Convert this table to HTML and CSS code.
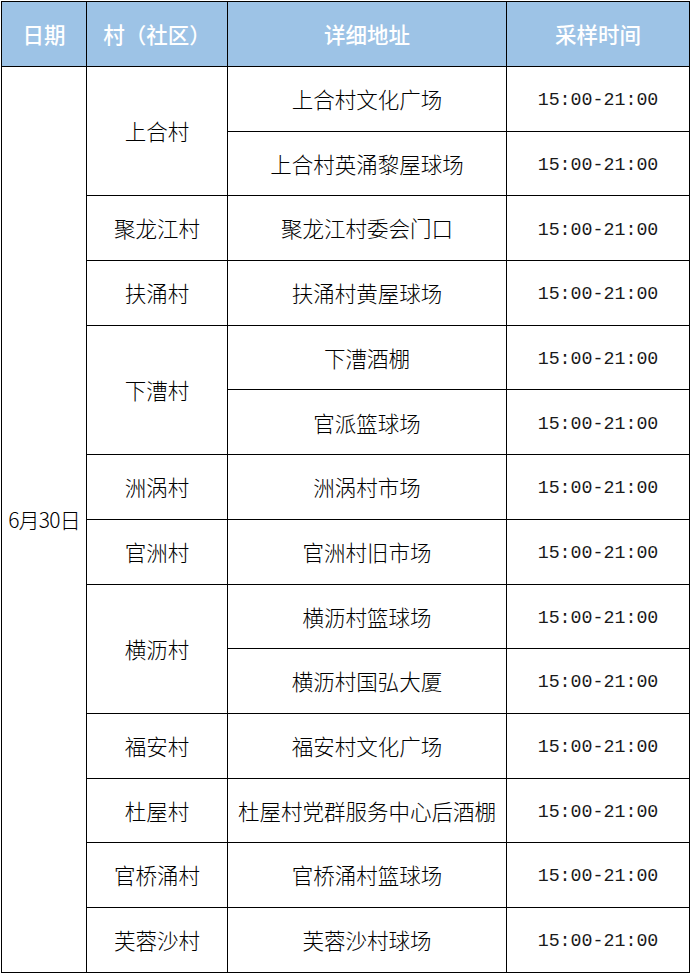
FILE: index.html
```html
<!DOCTYPE html>
<html lang="zh">
<head>
<meta charset="utf-8">
<link rel="stylesheet" href="styles.css">
</head>
<body>
<table class="sched">
<colgroup><col class="c1"><col class="c2"><col class="c3"><col class="c4"></colgroup>
<thead>
<tr><th>日期</th><th>村（社区）</th><th>详细地址</th><th>采样时间</th></tr>
</thead>
<tbody>
<tr><td rowspan="14" class="date">6月30日</td><td rowspan="2">上合村</td><td>上合村文化广场</td><td class="t">15:00-21:00</td></tr>
<tr><td>上合村英涌黎屋球场</td><td class="t">15:00-21:00</td></tr>
<tr><td>聚龙江村</td><td>聚龙江村委会门口</td><td class="t">15:00-21:00</td></tr>
<tr><td>扶涌村</td><td>扶涌村黄屋球场</td><td class="t">15:00-21:00</td></tr>
<tr><td rowspan="2">下漕村</td><td>下漕酒棚</td><td class="t">15:00-21:00</td></tr>
<tr><td>官派篮球场</td><td class="t">15:00-21:00</td></tr>
<tr><td>洲涡村</td><td>洲涡村市场</td><td class="t">15:00-21:00</td></tr>
<tr><td>官洲村</td><td>官洲村旧市场</td><td class="t">15:00-21:00</td></tr>
<tr><td rowspan="2">横沥村</td><td>横沥村篮球场</td><td class="t">15:00-21:00</td></tr>
<tr><td>横沥村国弘大厦</td><td class="t">15:00-21:00</td></tr>
<tr><td>福安村</td><td>福安村文化广场</td><td class="t">15:00-21:00</td></tr>
<tr><td>杜屋村</td><td>杜屋村党群服务中心后酒棚</td><td class="t">15:00-21:00</td></tr>
<tr><td>官桥涌村</td><td>官桥涌村篮球场</td><td class="t">15:00-21:00</td></tr>
<tr><td>芙蓉沙村</td><td>芙蓉沙村球场</td><td class="t">15:00-21:00</td></tr>
</tbody>
</table>
</body>
</html>
```
FILE: styles.css
```css
html, body {
  margin: 0;
  padding: 0;
  background: #ffffff;
}
body {
  padding: 1px 0 0 1px;
}
.sched {
  border-collapse: collapse;
  table-layout: fixed;
  width: 688px;
  font-family: "Noto Sans CJK SC", "Noto Sans", sans-serif;
  font-size: 21.5px;
  font-weight: 300;
  color: #000;
}
.c1 { width: 85px; }
.c2 { width: 141px; }
.c3 { width: 279px; }
.c4 { width: 183px; }
.sched th, .sched td {
  border: 1px solid #000;
  text-align: center;
  vertical-align: middle;
  padding: 0;
  line-height: 1;
}
.sched th {
  background: #9dc3e6;
  color: #fff;
  font-weight: 500;
  font-size: 21.5px;
  height: 64px;
}
.sched td {
  height: 63.7px;
}
.sched td.date {
  font-size: 21px;
  letter-spacing: -0.8px;
}
.sched td.t {
  font-family: "Liberation Mono", "DejaVu Sans Mono", monospace;
  font-weight: 400;
  font-size: 18.3px;
  color: #1a1a1a;
  padding-top: 3px;
  height: 60.7px;
}
```
